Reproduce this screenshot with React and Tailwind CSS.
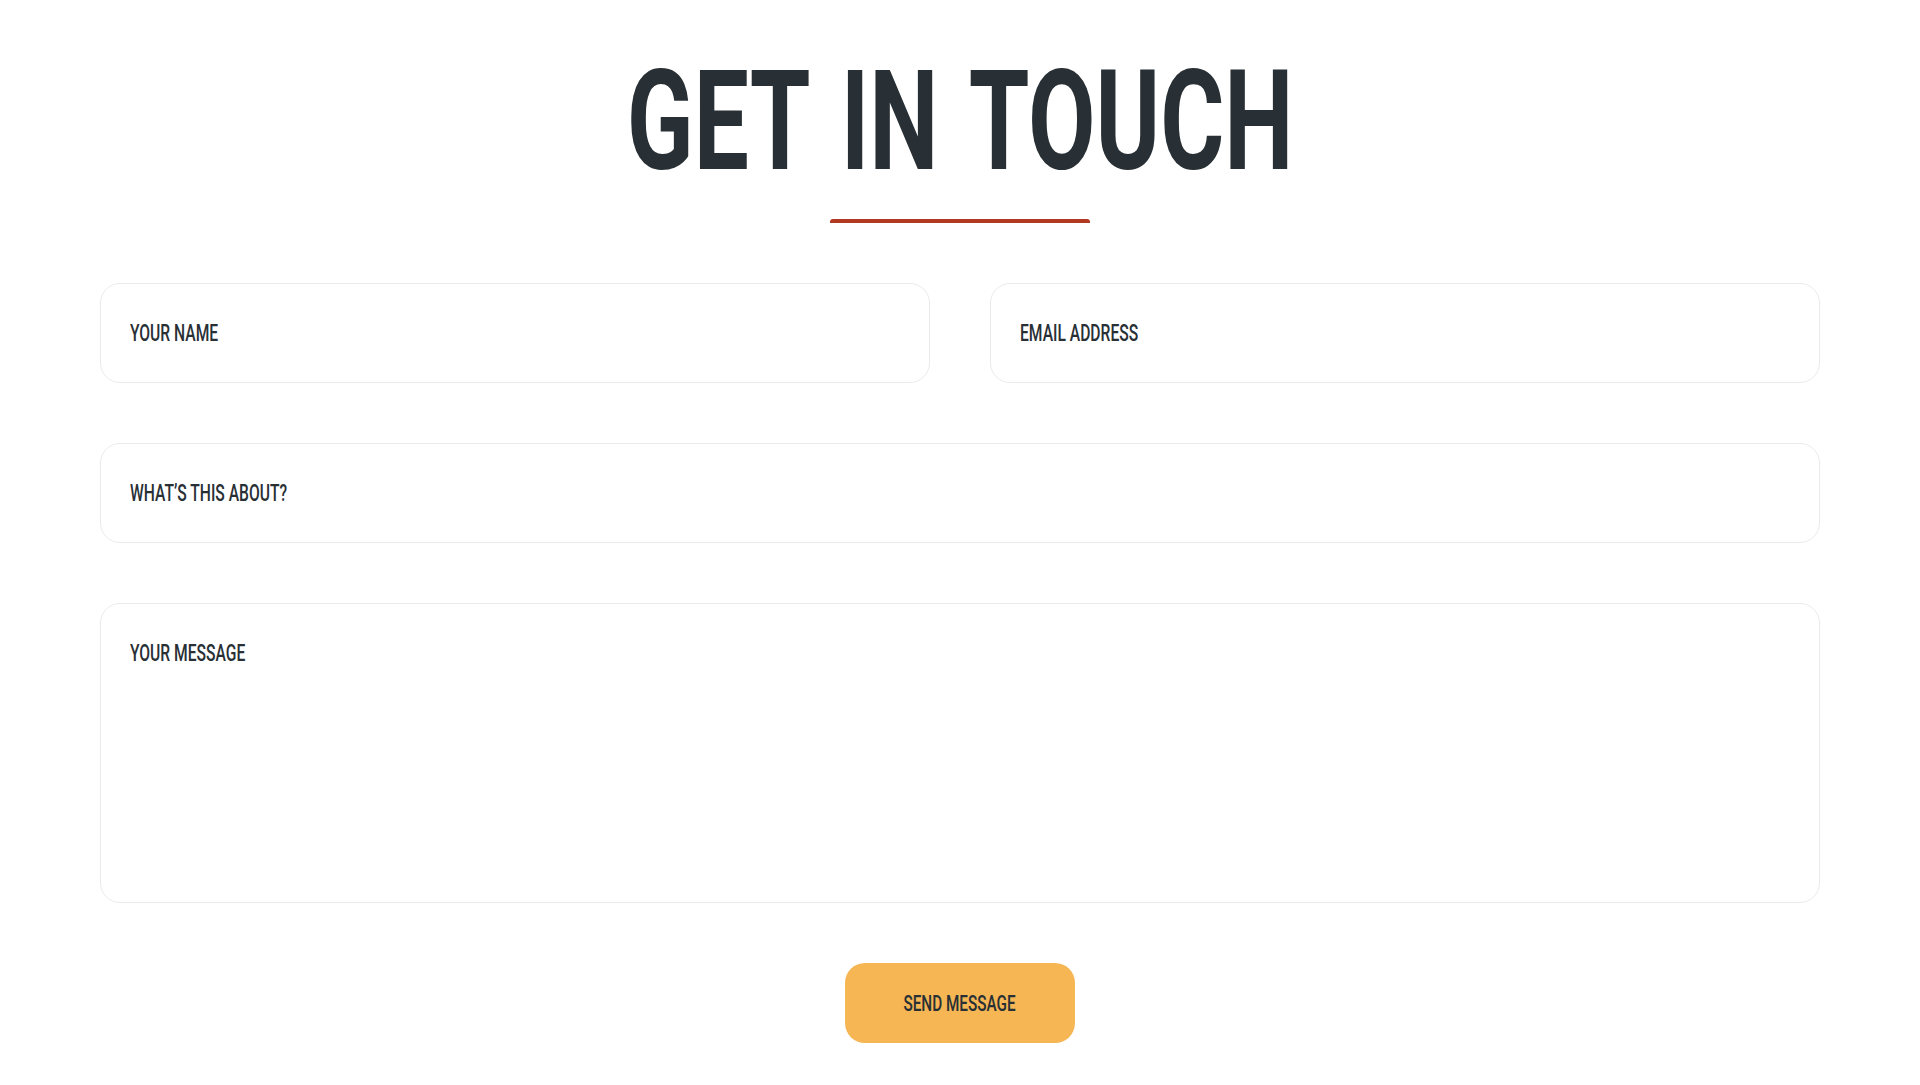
// Contact section: big condensed heading, red rule, and the message form.

const ink = "text-[#283035]";

function Label({ children }) {
  return (
    <span className="inline-block origin-left scale-x-[0.68] whitespace-nowrap text-[23px] font-medium leading-none">
      {children}
    </span>
  );
}

function Field({ label, className = "" }) {
  return (
    <div
      className={`flex h-[100px] items-center rounded-[20px] border border-[#ebebeb] bg-white pl-[29px] ${className}`}
    >
      <Label>{label}</Label>
    </div>
  );
}

export default function App() {
  return (
    <div className={`min-h-screen bg-white font-['Roboto','Liberation_Sans',sans-serif] ${ink}`}>
      <section className="mx-auto w-[1720px] pt-[51px]">
        <h1 className="text-center text-[140px] font-bold leading-none">
          <span className="inline-block scale-x-[0.7] whitespace-nowrap [word-spacing:12px]">GET IN TOUCH</span>
        </h1>
        <div className="mx-auto mt-[28px] h-1 w-[260px] rounded-t-[3px] bg-[#b23a22]" />

        <form className="mt-[60px] flex flex-col gap-[60px]" onSubmit={(e) => e.preventDefault()}>
          <div className="grid grid-cols-2 gap-[60px]">
            <Field label="YOUR NAME" />
            <Field label="EMAIL ADDRESS" />
          </div>
          <Field label="WHAT’S THIS ABOUT?" />
          <div className="h-[300px] rounded-[20px] border border-[#ebebeb] bg-white pl-[29px] pt-[38px]">
            <Label>YOUR MESSAGE</Label>
          </div>
          <div className="flex justify-center">
            <button
              type="submit"
              className="flex h-20 w-[230px] items-center justify-center rounded-[20px] bg-[#f6b654]"
            >
              <span className="inline-block scale-x-[0.68] whitespace-nowrap text-[22.5px] font-medium leading-none">
                SEND MESSAGE
              </span>
            </button>
          </div>
        </form>
      </section>
    </div>
  );
}
